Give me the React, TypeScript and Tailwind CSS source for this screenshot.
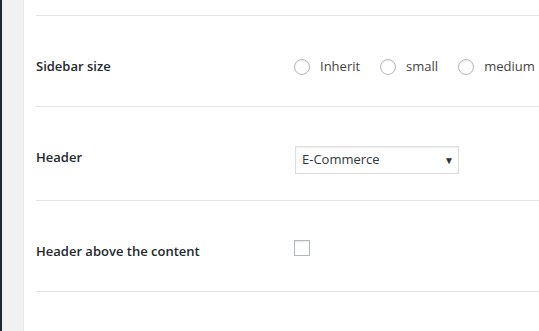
const font = "font-['Open_Sans',sans-serif]";

function Radio({ label }: { label: string }) {
  return (
    <label className="flex items-center">
      <span className="w-4 h-4 rounded-full border border-[#b4b9be] bg-white shadow-[inset_0_1px_2px_rgba(0,0,0,0.07)]" />
      <span className="ml-[10px] text-[13px] text-[#444]">{label}</span>
    </label>
  );
}

function Row({
  label,
  height,
  children,
}: {
  label: string;
  height: string;
  children: React.ReactNode;
}) {
  return (
    <div className={`flex border-b border-[#e5e5e5] pt-[40px] ${height}`}>
      <div className="w-[258px] text-[13px] font-semibold text-[#23282d] leading-5">{label}</div>
      <div className="flex-1">{children}</div>
    </div>
  );
}

export default function App() {
  return (
    <div className={`flex h-[331px] w-[539px] overflow-hidden bg-white ${font}`}>
      <div className="w-[2px] bg-[#23282d]" />
      <div className="w-[22px] bg-[#f1f1f1] border-r border-[#e8e8e8]" />
      <div className="flex-1 pl-[12px]">
        <div className="h-[16px] border-b border-[#e5e5e5]" />
        <Row label="Sidebar size" height="h-[91px]">
          <div className="flex items-center gap-[20px] mt-[1px]">
            <Radio label="Inherit" />
            <Radio label="small" />
            <Radio label="medium" />
          </div>
        </Row>
        <Row label="Header" height="h-[94px]">
          <div className="relative -mt-[1px] ml-[1px] flex h-7 w-[164px] items-center border border-[#ddd] bg-white pl-[6px] shadow-[inset_0_1px_2px_rgba(0,0,0,0.07)]">
            <span className="text-[13px] text-[#32373c]">E-Commerce</span>
            <span className="absolute right-[4px] top-[6px] text-[10px] text-[#333]">▼</span>
          </div>
        </Row>
        <Row label="Header above the content" height="h-[91px]">
          <div className="w-4 h-4 -mt-[1px] border border-[#b4b9be] bg-white shadow-[inset_0_1px_2px_rgba(0,0,0,0.1)]" />
        </Row>
      </div>
    </div>
  );
}
